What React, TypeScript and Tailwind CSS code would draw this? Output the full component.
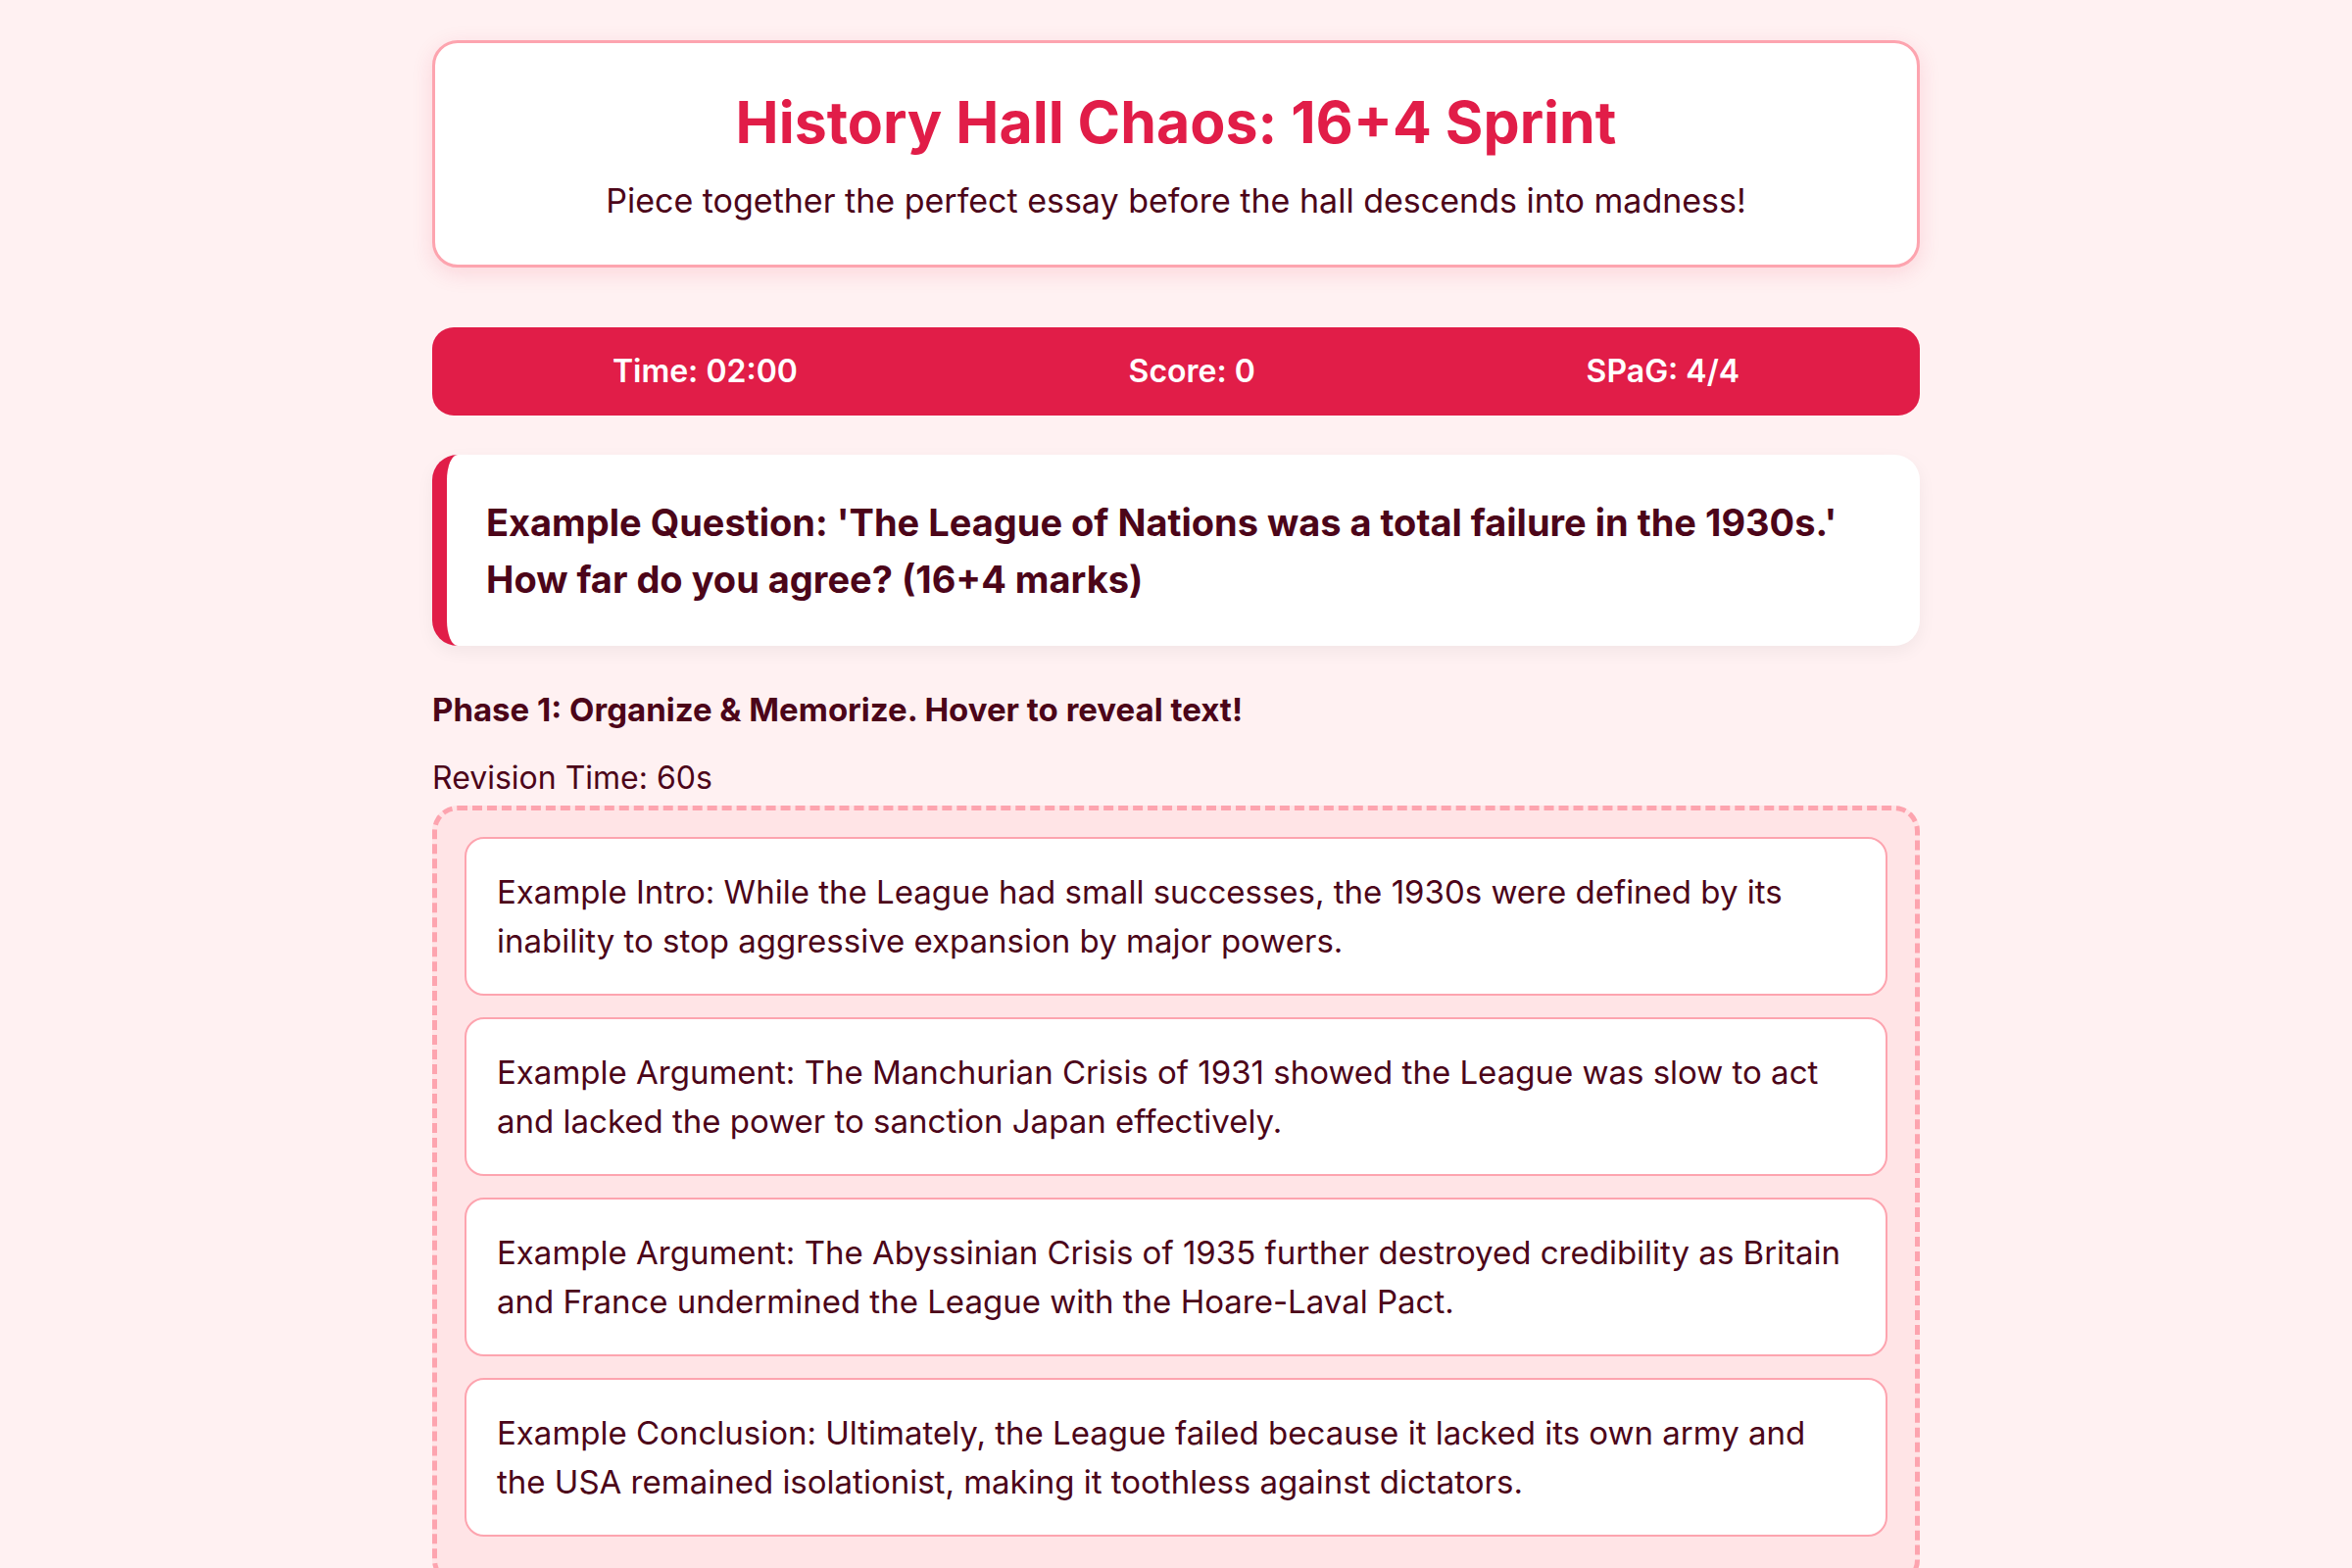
const cards = [
  'Example Intro: While the League had small successes, the 1930s were defined by its inability to stop aggressive expansion by major powers.',
  'Example Argument: The Manchurian Crisis of 1931 showed the League was slow to act and lacked the power to sanction Japan effectively.',
  'Example Argument: The Abyssinian Crisis of 1935 further destroyed credibility as Britain and France undermined the League with the Hoare-Laval Pact.',
  'Example Conclusion: Ultimately, the League failed because it lacked its own army and the USA remained isolationist, making it toothless against dictators.',
];

export default function App() {
  return (
    <div className="min-h-screen bg-[#fff1f2] text-[#4c0519] font-['Inter',_'Noto_Sans',_sans-serif]">
      <div className="mx-auto w-[1518px] pt-[41px] pb-[60px]">
        {/* header */}
        <div className="rounded-[26px] border-[3px] border-[#fda4af] bg-white pt-[45px] pb-[41px] text-center shadow-[0_6px_22px_rgba(225,29,72,0.13)]">
          <h1 className="mb-[20px] text-[59px] font-bold leading-[72px] text-[#e11d48]">
            History Hall Chaos: 16+4 Sprint
          </h1>
          <p className="text-[34px] leading-[48px]">
            Piece together the perfect essay before the hall descends into madness!
          </p>
        </div>

        {/* stats */}
        <div className="mt-[61px] flex h-[90px] items-center justify-around rounded-[22px] bg-[#e11d48] px-[15px] text-[32px] font-semibold text-white">
          <span>Time: 02:00</span>
          <span>Score: 0</span>
          <span>SPaG: 4/4</span>
        </div>

        {/* question */}
        <div className="mt-[40px] rounded-[26px] border-l-[15px] border-[#e11d48] bg-white pt-[40px] pb-[39px] pl-[40px] pr-[40px] shadow-[0_6px_18px_rgba(0,0,0,0.05)]">
          <p className="text-[38px] font-bold leading-[58px]">
            Example Question: 'The League of Nations was a total failure in the 1930s.' How far do you agree? (16+4 marks)
          </p>
        </div>

        <p className="mt-[41px] text-[33px] font-bold leading-[48px]">
          Phase 1: Organize &amp; Memorize. Hover to reveal text!
        </p>
        <p className="mt-[22px] text-[32px] leading-[48px]">Revision Time: 60s</p>

        {/* cards */}
        <div className="mt-[4px] flex flex-col gap-[22px] rounded-[26px] border-[5px] border-dashed border-[#fda4af] bg-[#ffe4e6] px-[28px] pt-[27px] pb-[45px]">
          {cards.map((c) => (
            <div
              key={c}
              className="rounded-[20px] border-2 border-[#fda4af] bg-white px-[31px] py-[29px] text-[33px] leading-[50px]"
            >
              {c}
            </div>
          ))}
        </div>
      </div>
    </div>
  );
}
